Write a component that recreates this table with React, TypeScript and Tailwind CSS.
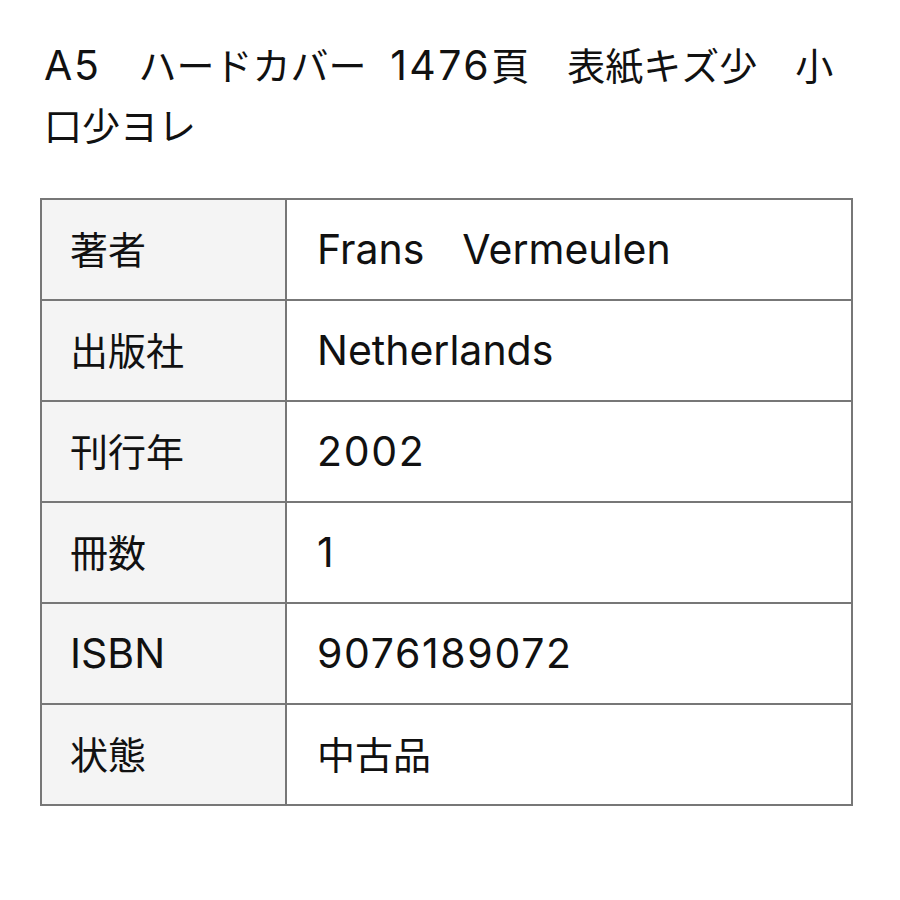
import React from "react";

const L = ({ children, d }: { children: React.ReactNode; d?: boolean }) => (
  <span className={d ? "text-[41px] tracking-[0.04em]" : "text-[41px]"}>{children}</span>
);

const rows: [React.ReactNode, React.ReactNode, string][] = [
  ["著者", <><L>Frans</L>　<L>Vermeulen</L></>, "a"],
  ["出版社", <L>Netherlands</L>, "b"],
  ["刊行年", <L d>2002</L>, "c"],
  ["冊数", <L d>1</L>, "d"],
  [<L>ISBN</L>, <L d>9076189072</L>, "e"],
  ["状態", "中古品", "f"],
];

export default function App() {
  return (
    <div
      className="w-[900px] h-[900px] bg-white px-[40px] pt-[35px] text-[#111]"
      style={{ fontFamily: 'Inter, "Noto Sans CJK JP", "Noto Sans", sans-serif' }}
    >
      <p className="text-[38px] leading-[60px] pl-[4px]">
        <L d>A5</L>　ハードカバー{" "}
        <span className="ml-[13px] text-[41px] tracking-[0.06em]">1476</span>頁　表紙キズ少　小
        <br />
        口少ヨレ
      </p>
      <table className="mt-[42px] w-[813px] border-collapse border-2 border-[#777]">
        <tbody>
          {rows.map(([k, v, id]) => (
            <tr key={id} className="h-[101px]">
              <td className="w-[245px] border-2 border-[#777] bg-[#f4f4f4] pl-[28px] text-[38px] leading-[50px] align-middle">
                {k}
              </td>
              <td className="border-2 border-[#777] pl-[30px] text-[38px] leading-[50px] align-middle">
                {v}
              </td>
            </tr>
          ))}
        </tbody>
      </table>
    </div>
  );
}
